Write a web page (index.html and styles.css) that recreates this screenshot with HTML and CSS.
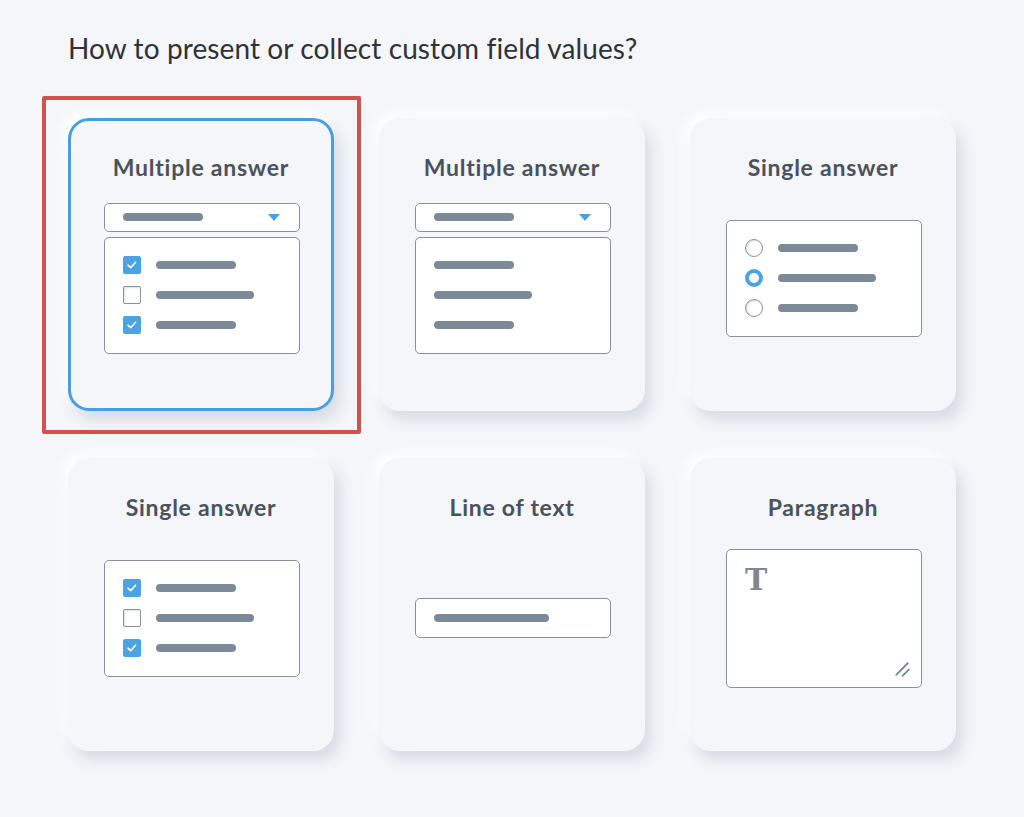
FILE: index.html
```html
<!DOCTYPE html>
<html>
<head>
<meta charset="utf-8">
<link rel="stylesheet" href="styles.css">
</head>
<body>
<main class="page">
  <h1 class="question">How to present or collect custom field values?</h1>
  <div class="grid">
    <div class="cell selected-wrap">
      <div class="card selected">
        <div class="card-title">Multiple answer</div>
        <div class="card-body">
          <div class="stack">
            <div class="box dropdown"><span class="bar w80"></span><span class="caret"></span></div>
            <div class="box list">
              <div class="row"><span class="check on"><svg viewBox="0 0 18 18"><path d="M4.5 9.2l3 2.8 5.5-6" fill="none" stroke="#fff" stroke-width="1.8" stroke-linecap="round" stroke-linejoin="round"/></svg></span><span class="bar w80"></span></div>
              <div class="row"><span class="check"></span><span class="bar w97"></span></div>
              <div class="row"><span class="check on"><svg viewBox="0 0 18 18"><path d="M4.5 9.2l3 2.8 5.5-6" fill="none" stroke="#fff" stroke-width="1.8" stroke-linecap="round" stroke-linejoin="round"/></svg></span><span class="bar w80"></span></div>
            </div>
          </div>
        </div>
      </div>
    </div>
    <div class="cell">
      <div class="card">
        <div class="card-title">Multiple answer</div>
        <div class="card-body">
          <div class="stack">
            <div class="box dropdown"><span class="bar w80"></span><span class="caret"></span></div>
            <div class="box list">
              <div class="row"><span class="bar w80"></span></div>
              <div class="row"><span class="bar w97"></span></div>
              <div class="row"><span class="bar w80"></span></div>
            </div>
          </div>
        </div>
      </div>
    </div>
    <div class="cell">
      <div class="card">
        <div class="card-title">Single answer</div>
        <div class="card-body">
          <div class="box list">
            <div class="row"><span class="radio"></span><span class="bar w80"></span></div>
            <div class="row"><span class="radio on"></span><span class="bar w97"></span></div>
            <div class="row"><span class="radio"></span><span class="bar w80"></span></div>
          </div>
        </div>
      </div>
    </div>
    <div class="cell">
      <div class="card">
        <div class="card-title">Single answer</div>
        <div class="card-body">
          <div class="box list">
            <div class="row"><span class="check on"><svg viewBox="0 0 18 18"><path d="M4.5 9.2l3 2.8 5.5-6" fill="none" stroke="#fff" stroke-width="1.8" stroke-linecap="round" stroke-linejoin="round"/></svg></span><span class="bar w80"></span></div>
            <div class="row"><span class="check"></span><span class="bar w97"></span></div>
            <div class="row"><span class="check on"><svg viewBox="0 0 18 18"><path d="M4.5 9.2l3 2.8 5.5-6" fill="none" stroke="#fff" stroke-width="1.8" stroke-linecap="round" stroke-linejoin="round"/></svg></span><span class="bar w80"></span></div>
          </div>
        </div>
      </div>
    </div>
    <div class="cell">
      <div class="card">
        <div class="card-title">Line of text</div>
        <div class="card-body">
          <div class="box line"><span class="bar w114"></span></div>
        </div>
      </div>
    </div>
    <div class="cell">
      <div class="card">
        <div class="card-title">Paragraph</div>
        <div class="card-body">
          <div class="box para">
            <span class="tee">T</span>
            <svg class="grip" viewBox="0 0 20 20"><path d="M4 16L15 5M10 17l6-6" stroke="#7d8791" stroke-width="1.8" stroke-linecap="round"/></svg>
          </div>
        </div>
      </div>
    </div>
  </div>
</main>
</body>
</html>
```

FILE: styles.css
```css
*, *::before, *::after { box-sizing: border-box; }
html, body { margin: 0; padding: 0; }
body {
  background: #f4f6f9;
  font-family: "Lato", "Open Sans", sans-serif;
  width: 1024px;
  height: 817px;
  overflow: hidden;
}
.page {
  padding: 30px 0 0 68px;
}
.question {
  margin: 0;
  font-weight: 400;
  font-size: 28px;
  line-height: 36px;
  color: #2f3338;
  letter-spacing: 0.1px;
}
.grid {
  margin-top: 52px;
  display: grid;
  grid-template-columns: repeat(3, 266px);
  grid-auto-rows: 293px;
  column-gap: 45px;
  row-gap: 47px;
}
.cell { position: relative; }
.selected-wrap::before {
  content: "";
  position: absolute;
  left: -26px;
  top: -22px;
  width: 319px;
  height: 338px;
  border: 4px solid #d2514e;
  border-radius: 2px;
}
.card {
  position: relative;
  height: 100%;
  background: #f4f6f9;
  border-radius: 21px;
  box-shadow: 6px 9px 14px rgba(150, 160, 180, 0.3), -6px -6px 12px rgba(255, 255, 255, 0.95);
  display: flex;
  flex-direction: column;
  padding: 35px 0 36px;
}
.card.selected {
  border: 3px solid #4a9ee0;
  padding: 32px 0 33px;
}
.card-title {
  text-align: center;
  font-size: 23px;
  line-height: 28px;
  font-weight: 700;
  color: #4b525c;
  letter-spacing: 0.75px;
}
.card-body {
  flex: 1;
  display: flex;
  align-items: center;
  justify-content: center;
  padding-left: 2px;
}
.stack {
  display: flex;
  flex-direction: column;
  gap: 5px;
}
.box {
  width: 196px;
  background: #fff;
  border: 1.5px solid #8a9097;
  border-radius: 5px;
}
.dropdown {
  height: 29px;
  display: flex;
  align-items: center;
  justify-content: space-between;
  padding: 0 19px 0 18px;
}
.caret {
  width: 0;
  height: 0;
  border-left: 6px solid transparent;
  border-right: 6px solid transparent;
  border-top: 7px solid #4a9ee0;
}
.list {
  height: 117px;
  display: flex;
  flex-direction: column;
  justify-content: center;
  gap: 12.5px;
  padding: 0 18px;
}
.row {
  display: flex;
  align-items: center;
  gap: 15px;
  height: 17.5px;
}
.bar {
  display: block;
  height: 8px;
  border-radius: 4px;
  background: #7c8996;
}
.w80 { width: 80px; }
.w97 { width: 98px; }
.w114 { width: 115px; }
.check {
  width: 18px;
  height: 18px;
  border: 1.5px solid #8a9097;
  border-radius: 2px;
  background: #fff;
  box-shadow: inset 1px 1px 2px rgba(0,0,0,0.12);
  flex: none;
  display: flex;
}
.check.on {
  background: #4ba3e3;
  border-color: #4ba3e3;
  box-shadow: none;
}
.check svg { width: 100%; height: 100%; }
.radio {
  width: 18px;
  height: 18px;
  border: 1.5px solid #8a9097;
  border-radius: 50%;
  background: #fff;
  box-shadow: inset 1px 1px 2px rgba(0,0,0,0.15);
  flex: none;
}
.radio.on {
  border: 4px solid #4ba3e3;
  box-shadow: none;
}
.line {
  height: 40px;
  display: flex;
  align-items: center;
  padding: 0 18px;
}
.para {
  position: relative;
  height: 139px;
  padding: 15px 0 0 18px;
}
.tee {
  display: block;
  font-family: "DejaVu Serif", "Liberation Serif", serif;
  font-weight: 700;
  font-size: 30px;
  line-height: 30px;
  color: #7d8791;
}
.grip {
  position: absolute;
  right: 8px;
  bottom: 8px;
  width: 21px;
  height: 21px;
}
```
